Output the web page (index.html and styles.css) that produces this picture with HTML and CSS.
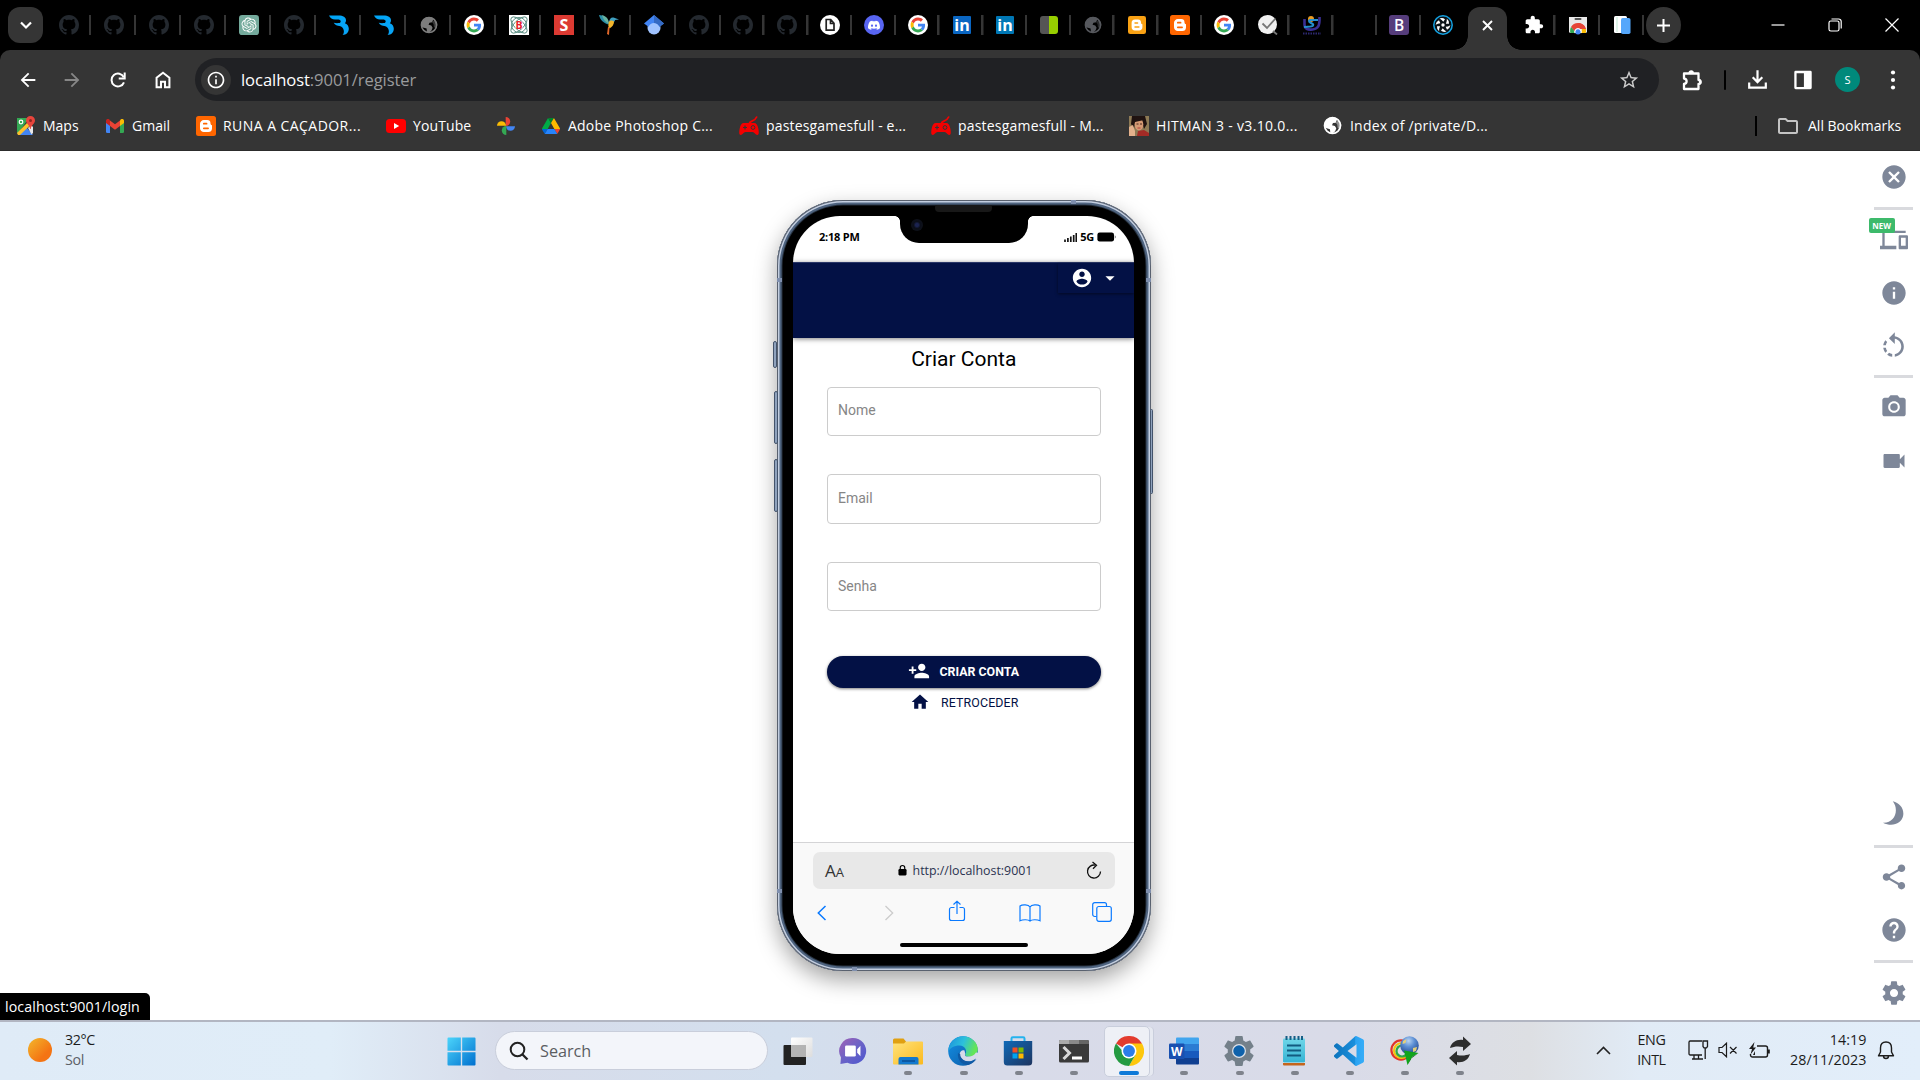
FILE: index.html
```html
<!DOCTYPE html>
<html lang="en">
<head>
<meta charset="utf-8">
<title>localhost:9001/register</title>
<link rel="stylesheet" href="styles.css">
</head>
<body>
<svg class="sprite" width="0" height="0" aria-hidden="true">
  <defs>
    <linearGradient id="g-win" x1="0" y1="0" x2="1" y2="1"><stop offset="0" stop-color="#4cd5fb"/><stop offset="1" stop-color="#0070cf"/></linearGradient>
    <linearGradient id="g-sun" x1="0" y1="0" x2="1" y2="1"><stop offset="0" stop-color="#f3b82c"/><stop offset=".7" stop-color="#f47413"/></linearGradient>
    <linearGradient id="g-front" x1="0" y1="0" x2="1" y2="1"><stop offset="0" stop-color="#fff"/><stop offset="1" stop-color="#ddd"/></linearGradient>
    <linearGradient id="g-chat" x1="0" y1="0" x2="1" y2="1"><stop offset="0" stop-color="#a261b5"/><stop offset=".5" stop-color="#6b63c7"/><stop offset="1" stop-color="#4b56cf"/></linearGradient>
    <linearGradient id="g-folder" x1="0" y1="0" x2="1" y2="1"><stop offset="0" stop-color="#ffe37c"/><stop offset="1" stop-color="#fbb91d"/></linearGradient>
    <linearGradient id="g-edge" x1="0" y1="0" x2="1" y2=".3"><stop offset="0" stop-color="#1b8fdc"/><stop offset=".55" stop-color="#2cc0dc"/><stop offset="1" stop-color="#63e557"/></linearGradient>
    <linearGradient id="g-edge2" x1="0" y1="0" x2="1" y2="1"><stop offset="0" stop-color="#1491e6"/><stop offset="1" stop-color="#0c59a4"/></linearGradient>
    <linearGradient id="g-store" x1="0" y1="0" x2="1" y2="1"><stop offset="0" stop-color="#0f69b7"/><stop offset="1" stop-color="#1e3560"/></linearGradient>
    <linearGradient id="g-code" x1="0" y1="0" x2="1" y2="0"><stop offset="0" stop-color="#0d74bd"/><stop offset=".7" stop-color="#1a8fdc"/><stop offset=".72" stop-color="#2ba3f2"/><stop offset="1" stop-color="#36adf8"/></linearGradient>
    <linearGradient id="g-note" x1="0" y1="0" x2="0" y2="1"><stop offset="0" stop-color="#6fd6e8"/><stop offset="1" stop-color="#35b4d4"/></linearGradient>
    <radialGradient id="g-idm" cx=".45" cy=".25" r=".8"><stop offset="0" stop-color="#b9d4f2"/><stop offset=".4" stop-color="#5c8fd4"/><stop offset="1" stop-color="#1d3f86"/></radialGradient>
    <linearGradient id="g-bird" x1="0" y1="0" x2="1" y2="1"><stop offset="0" stop-color="#00a6f7"/><stop offset="1" stop-color="#0aa4f5"/></linearGradient>
  </defs>
  <symbol id="github" viewBox="0 0 16 16"><path fill="#24292f" d="M8 0C3.58 0 0 3.58 0 8c0 3.54 2.29 6.53 5.47 7.59.4.07.55-.17.55-.38 0-.19-.01-.82-.01-1.49-2.01.37-2.53-.49-2.69-.94-.09-.23-.48-.94-.82-1.13-.28-.15-.68-.52-.01-.53.63-.01 1.08.58 1.23.82.72 1.21 1.87.87 2.33.66.07-.52.28-.87.51-1.07-1.78-.2-3.64-.89-3.64-3.95 0-.87.31-1.59.82-2.15-.08-.2-.36-1.02.08-2.12 0 0 .67-.21 2.2.82.64-.18 1.32-.27 2-.27.68 0 1.36.09 2 .27 1.53-1.04 2.2-.82 2.2-.82.44 1.1.16 1.92.08 2.12.51.56.82 1.27.82 2.15 0 3.07-1.87 3.75-3.65 3.95.29.25.54.73.54 1.48 0 1.07-.01 1.93-.01 2.2 0 .21.15.46.55.38A8.013 8.013 0 0 0 16 8c0-4.42-3.58-8-8-8z"/></symbol>
  <symbol id="chatgpt" viewBox="0 0 32 32"><rect width="32" height="32" rx="5" fill="#74aa9c"/><path fill="#fff" transform="translate(4 4)" d="M22.2819 9.8211a5.9847 5.9847 0 0 0-.5157-4.9108 6.0462 6.0462 0 0 0-6.5098-2.9A6.0651 6.0651 0 0 0 4.9807 4.1818a5.9847 5.9847 0 0 0-3.9977 2.9 6.0462 6.0462 0 0 0 .7427 7.0966 5.98 5.98 0 0 0 .511 4.9107 6.051 6.051 0 0 0 6.5146 2.9001A5.9847 5.9847 0 0 0 13.2599 24a6.0557 6.0557 0 0 0 5.7718-4.2058 5.9894 5.9894 0 0 0 3.9977-2.9001 6.0557 6.0557 0 0 0-.7475-7.0729zm-9.022 12.6081a4.4755 4.4755 0 0 1-2.8764-1.0408l.1419-.0804 4.7783-2.7582a.7948.7948 0 0 0 .3927-.6813v-6.7369l2.02 1.1686a.071.071 0 0 1 .038.052v5.5826a4.504 4.504 0 0 1-4.4945 4.4944zm-9.6607-4.1254a4.4708 4.4708 0 0 1-.5346-3.0137l.142.0852 4.783 2.7582a.7712.7712 0 0 0 .7806 0l5.8428-3.3685v2.3324a.0804.0804 0 0 1-.0332.0615L9.74 19.9502a4.4992 4.4992 0 0 1-6.1408-1.6464zM2.3408 7.8956a4.485 4.485 0 0 1 2.3655-1.9728V11.6a.7664.7664 0 0 0 .3879.6765l5.8144 3.3543-2.0201 1.1685a.0757.0757 0 0 1-.071 0l-4.8303-2.7865A4.504 4.504 0 0 1 2.3408 7.872zm16.5963 3.8558L13.1038 8.364 15.1192 7.2a.0757.0757 0 0 1 .071 0l4.8303 2.7913a4.4944 4.4944 0 0 1-.6765 8.1042v-5.6772a.79.79 0 0 0-.407-.667zm2.0107-3.0231l-.142-.0852-4.7735-2.7818a.7759.7759 0 0 0-.7854 0L9.409 9.2297V6.8974a.0662.0662 0 0 1 .0284-.0615l4.8303-2.7866a4.4992 4.4992 0 0 1 6.6802 4.66zM8.3065 12.863l-2.02-1.1638a.0804.0804 0 0 1-.038-.0567V6.0742a4.4992 4.4992 0 0 1 7.3757-3.4537l-.142.0805L8.704 5.459a.7948.7948 0 0 0-.3927.6813zm1.0976-2.3654l2.602-1.4998 2.6069 1.4998v2.9994l-2.5974 1.4997-2.6067-1.4997Z"/></symbol>
  <symbol id="swoosh" viewBox="0 0 20 20"><path fill="url(#g-bird)" d="M0 .5h9.500c4.600 0 7.500 1.900 7.500 4.800 0 1.400-.5 2.300-1.200 2.900 2.500.9 4 2.900 4 5.600 0 3.500-2.500 6.200-6.300 6.200 1.100-1 1.600-2.700 1.300-4.500-.4-2.400-2-4-4.300-4.400-2-.3-4.500-1-5.800-3.400 1.400.4 3.400.6 5.300.3 1.100-.2 1.700-.8 1.700-1.600 0-1.200-1.200-1.800-3.200-1.800H6C3.200 4.600 1.200 2.900 0 .5z"/></symbol>
  <symbol id="globe" viewBox="2 2 20 20"><path d="M12 3.600A8.400 8.400 0 1 0 12 20.400 8.400 8.400 0 0 0 12 3.600z" fill="none" stroke="currentColor" stroke-width="1.800"/><path fill="currentColor" d="M9 3.500c2 .3 5-1 8 1.500l-1.500 4-3 .4-1 2.400 3 .7 1.500 2.500-1.200 3-3 2.600-2-.2-.5-4.500-5-1.500L3 11l2-4z"/><path fill="currentColor" d="M15.500 9l3-3 3 5-1 5-3-1.500-.5-3.500z" opacity=".45"/></symbol>
  <symbol id="google" viewBox="0 0 20 20"><circle cx="10" cy="10" r="10" fill="#fff"/><g transform="translate(2.600 2.600) scale(.308)"><path fill="#EA4335" d="M24 9.500c3.540 0 6.710 1.220 9.210 3.600l6.850-6.850C35.900 2.380 30.470 0 24 0 14.620 0 6.510 5.380 2.560 13.220l7.980 6.190C12.430 13.720 17.740 9.500 24 9.500z"/><path fill="#4285F4" d="M46.980 24.550c0-1.570-.15-3.090-.38-4.550H24v9.020h12.940c-.58 2.960-2.260 5.480-4.780 7.180l7.730 6c4.510-4.180 7.090-10.360 7.090-17.650z"/><path fill="#FBBC05" d="M10.530 28.590c-.48-1.450-.76-2.990-.76-4.590s.27-3.140.76-4.590l-7.980-6.190C.92 16.460 0 20.120 0 24c0 3.880.92 7.540 2.560 10.780l7.970-6.190z"/><path fill="#34A853" d="M24 48c6.480 0 11.930-2.130 15.890-5.810l-7.730-6c-2.150 1.450-4.920 2.300-8.160 2.300-6.260 0-11.570-4.220-13.470-9.910l-7.980 6.190C6.510 42.620 14.620 48 24 48z"/></g></symbol>
  <symbol id="hummingbird" viewBox="0 0 20 20"><path fill="#2b8fa8" d="M0 0c4 0 9 3 9.500 9.500C5 8.500 1 5 0 0z"/><path fill="#67b2a0" d="M3 0c4 1 7 4 7 9-4-2-6-5-7-9z"/><path fill="#3f9fc0" d="M10 7c.5-3 2-5 4.500-4.500l5.500 2-4 .5c0 1-1 2-2 3z"/><path fill="#f2b52c" d="M10 7c1-2 3-2 5-.5 0 3-1.500 5-4.500 7-1.500-2-1.500-4-.5-6.500z"/><path fill="#e2682a" d="M10.500 12l-.5 8-2-1 1-7z"/></symbol>
  <symbol id="scholar" viewBox="0 0 20 20"><circle cx="10" cy="13" r="6.500" fill="#a0c3ff"/><path fill="#4285f4" d="M10 0L0 8.500l4.500 3.200C5.500 9.500 7.500 8 10 8s4.500 1.500 5.500 3.700L20 8.500z"/><path fill="#356ac3" d="M10 0l10 8.500-4.500 3.200C14.500 9.500 12.500 8 10 8z"/></symbol>
  <symbol id="page" viewBox="0 0 20 20"><circle cx="10" cy="10" r="10" fill="#fff"/><path d="M6.200 4.500h4.500l3.300 3.700v7H6.200zM10.500 4.500v4H14" fill="none" stroke="#222" stroke-width="1.700"/></symbol>
  <symbol id="discord" viewBox="0 0 20 20"><circle cx="10" cy="10" r="10" fill="#5865f2"/><path transform="translate(4 4.200) scale(.5)" fill="#fff" d="M20.317 4.370a19.790 19.790 0 0 0-4.885-1.515.074.074 0 0 0-.079.037c-.21.375-.444.864-.608 1.250a18.270 18.270 0 0 0-5.487 0 12.640 12.640 0 0 0-.617-1.250.077.077 0 0 0-.079-.037A19.736 19.736 0 0 0 3.677 4.370a.07.07 0 0 0-.032.027C.533 9.046-.32 13.580.099 18.057a.082.082 0 0 0 .031.057 19.900 19.900 0 0 0 5.993 3.030.078.078 0 0 0 .084-.028c.462-.63.874-1.295 1.226-1.994a.076.076 0 0 0-.041-.106 13.107 13.107 0 0 1-1.872-.892.077.077 0 0 1-.008-.128c.126-.094.252-.192.372-.291a.074.074 0 0 1 .077-.01c3.928 1.793 8.180 1.793 12.062 0a.074.074 0 0 1 .078.009c.12.1.246.198.373.292a.077.077 0 0 1-.006.127 12.299 12.299 0 0 1-1.873.892.077.077 0 0 0-.041.107c.36.698.772 1.362 1.225 1.993a.076.076 0 0 0 .084.028 19.839 19.839 0 0 0 6.002-3.030.077.077 0 0 0 .032-.054c.5-5.177-.838-9.674-3.549-13.660a.061.061 0 0 0-.031-.03zM8.020 15.330c-1.183 0-2.157-1.085-2.157-2.419 0-1.333.956-2.419 2.157-2.419 1.210 0 2.176 1.096 2.157 2.420 0 1.333-.956 2.418-2.157 2.418zm7.975 0c-1.183 0-2.157-1.085-2.157-2.419 0-1.333.955-2.419 2.157-2.419 1.210 0 2.176 1.096 2.157 2.420 0 1.333-.946 2.418-2.157 2.418z"/></symbol>
  <symbol id="halves" viewBox="0 0 20 20"><path fill="#555" d="M4 1h6v18H4a3 3 0 0 1-3-3V4a3 3 0 0 1 3-3z"/><path fill="#97cf00" d="M10 1h6a3 3 0 0 1 3 3v12a3 3 0 0 1-3 3h-6z"/></symbol>
  <symbol id="blogger" viewBox="0 0 20 20"><rect width="20" height="20" rx="2.500" fill="currentColor"/><path fill="#fff" d="M8 4h3a3.400 3.400 0 0 1 3.500 3.300c0 1.300.4 1.700 1.500 1.900v3.300A3.700 3.700 0 0 1 12.300 16H8a3.800 3.800 0 0 1-4-3.700V8a3.900 3.900 0 0 1 4-4z"/><path d="M7.800 7.700h2.800M7.800 12.300h4.300" stroke="currentColor" stroke-width="1.700" stroke-linecap="round"/></symbol>
  <symbol id="check" viewBox="0 0 20 20"><circle cx="9.500" cy="9.500" r="9.500" fill="#f1f1f1"/><path d="M4.500 8.500l4.500 4.500 8.500-9.500M15 16l4 3.500" fill="none" stroke="#777" stroke-width="1.800"/></symbol>
  <symbol id="unsave" viewBox="0 0 20 20"><path d="M2.500 4v6c0 3.500 3 5 8 4.500 5-.5 7.500-3 7-12.500" fill="none" stroke="#3a2f95" stroke-width="2.600"/><circle cx="9" cy="4" r="3" fill="#e89a23"/><path d="M16 5H8c-3.500 2.500 4.500 3 3 5.500-1 1.500-5 1-9 1.500" fill="none" stroke="#2590d0" stroke-width="2.200"/><path d="M1 18.500h18" stroke="#2d2870" stroke-width="2" stroke-dasharray="1.500 1"/></symbol>
  <symbol id="quasar" viewBox="0 0 20 20"><circle cx="10" cy="10" r="9.200" fill="#0b1216" stroke="#14a3e4" stroke-width="1.500"/><g fill="#fff"><path d="M6.500 3.500Q9.500 2.300 12 4.200L10.300 6.800Q9 4.800 6.500 3.500z"/><path d="M6.500 3.500Q9.500 2.300 12 4.200L10.300 6.800Q9 4.800 6.500 3.500z" transform="rotate(60 10 10)"/><path d="M6.500 3.500Q9.500 2.300 12 4.200L10.300 6.800Q9 4.800 6.500 3.500z" transform="rotate(120 10 10)"/><path d="M6.500 3.500Q9.500 2.300 12 4.200L10.300 6.800Q9 4.800 6.500 3.500z" transform="rotate(180 10 10)"/><path d="M6.500 3.500Q9.500 2.300 12 4.200L10.300 6.800Q9 4.800 6.500 3.500z" transform="rotate(240 10 10)"/><path d="M6.500 3.500Q9.500 2.300 12 4.200L10.300 6.800Q9 4.800 6.500 3.500z" transform="rotate(300 10 10)"/><circle cx="10" cy="10" r="1.700"/></g></symbol>
  <symbol id="extension" viewBox="0 0 24 24"><path fill="currentColor" d="M20.500 11H19V7c0-1.100-.9-2-2-2h-4V3.500C13 2.120 11.880 1 10.500 1S8 2.120 8 3.500V5H4c-1.100 0-1.990.9-1.990 2v3.800H3.500c1.490 0 2.700 1.210 2.700 2.700s-1.210 2.700-2.700 2.700H2V20c0 1.100.9 2 2 2h3.800v-1.500c0-1.490 1.210-2.700 2.700-2.700 1.490 0 2.700 1.210 2.700 2.700V22H17c1.100 0 2-.9 2-2v-4h1.500c1.380 0 2.500-1.120 2.500-2.500S21.880 11 20.500 11z"/></symbol>
  <symbol id="webstore" viewBox="0 0 20 20"><path fill="#e9e9e9" d="M1 2h18v15l-1 1H2l-1-1z"/><rect x="6.500" y="3" width="7" height="2" rx="1" fill="#555"/><path fill="#e64537" d="M10 8c4 0 7 2.500 7.800 6H10z"/><path fill="#e64537" d="M10 8a8 8 0 0 0-7 4l3.500 4.500L10 14h7.800C17 10.500 14 8 10 8z"/><path fill="#34a853" d="M3 12c-1 2-1 4-.7 6h5L6.500 16z"/><path fill="#fbbc05" d="M14 14h3.800c.4 1.500.2 3 0 4H13z"/><circle cx="10" cy="16.500" r="3" fill="#4285f4"/><path d="M7 18a3.200 3.200 0 1 1 6 0" fill="none" stroke="#fff" stroke-width="1.200"/></symbol>
  <symbol id="devices-blue" viewBox="0 0 20 20"><rect x="2" y="1" width="13" height="17" rx="1.500" fill="#fff"/><path d="M5 2v15" stroke="#9db" stroke-width=".6"/><rect x="9" y="3" width="9.500" height="16" rx="1.800" fill="#55a7fb"/></symbol>

  <symbol id="maps" viewBox="0 0 20 20"><path fill="#34a853" d="M1 2h12L2 17.500 1 17z"/><path fill="#4285f4" d="M3 19l7-8 7 8z"/><path fill="#fbc02d" d="M1 17L14 4l2.500 3L4 19H2z"/><path fill="#e8e8e8" d="M12 12l3-3 2 2v6l-1.500 1.500z"/><path fill="#e8453c" d="M14.500 0A4.500 4.500 0 0 1 19 4.500c0 3.200-3.500 4-4.300 8.500h-.6C13.500 8.500 10 7.700 10 4.500A4.500 4.500 0 0 1 14.500 0z"/><circle cx="14.500" cy="4.500" r="1.500" fill="#8e2720"/><circle cx="5" cy="6" r="1.800" fill="none" stroke="#fff" stroke-width="1.200"/></symbol>
  <symbol id="gmail" viewBox="0 0 20 20"><path fill="#4285f4" d="M1 6l4 3v8H2.300A1.300 1.300 0 0 1 1 15.700z"/><path fill="#34a853" d="M19 6l-4 3v8h2.700a1.300 1.300 0 0 0 1.300-1.300z"/><path fill="#ea4335" d="M5 4.500l5 3.800 5-3.800V10l-5 3.800L5 10z"/><path fill="#c5221f" d="M1 5c0-2 2-2.500 3.300-1.500L5 4.200V10L1 7z"/><path fill="#fbbc04" d="M19 5c0-2-2-2.500-3.300-1.500l-.7.700V10l4-3z"/></symbol>
  <symbol id="youtube" viewBox="0 0 20 20"><rect y="3" width="20" height="14" rx="3.500" fill="#f00"/><path fill="#fff" d="M8 7l5.200 3L8 13z"/></symbol>
  <symbol id="photos" viewBox="0 0 20 20"><path fill="#ea4335" d="M9.700 1A4.500 4.500 0 0 1 9.700 10z"/><path fill="#4285f4" d="M19 10.300a4.500 4.500 0 0 1-9 0z"/><path fill="#34a853" d="M10.300 19a4.500 4.500 0 0 1 0-9z"/><path fill="#fbbc04" d="M1 9.700a4.500 4.500 0 0 1 9 0z"/></symbol>
  <symbol id="drive" viewBox="0 0 87.300 78"><path fill="#0066da" d="m6.600 66.850 3.850 6.650c.8 1.400 1.950 2.500 3.300 3.300l13.750-23.800h-27.500c0 1.550.4 3.100 1.200 4.500z"/><path fill="#00ac47" d="m43.650 25-13.750-23.800c-1.350.8-2.500 1.900-3.300 3.300l-25.400 44a9.060 9.060 0 0 0 -1.200 4.500h27.500z"/><path fill="#ea4335" d="m73.550 76.800c1.350-.8 2.500-1.900 3.300-3.300l1.600-2.750 7.650-13.250c.8-1.400 1.200-2.950 1.200-4.500h-27.502l5.852 11.500z"/><path fill="#00832d" d="m43.650 25 13.750-23.800c-1.350-.8-2.900-1.200-4.500-1.200h-18.500c-1.600 0-3.150.45-4.500 1.200z"/><path fill="#2684fc" d="m59.800 53h-32.300l-13.750 23.800c1.350.8 2.900 1.200 4.500 1.200h50.800c1.600 0 3.150-.45 4.500-1.200z"/><path fill="#ffba00" d="m73.400 26.500-12.700-22c-.8-1.400-1.950-2.500-3.300-3.300l-13.750 23.800 16.150 28h27.450c0-1.550-.4-3.100-1.200-4.500z"/></symbol>
  <symbol id="gamepad" viewBox="0 0 20 20"><path d="M10.500 8c-.5-4 5-1.500 7.500-7.500" fill="none" stroke="#f50000" stroke-width="1.700"/><path fill="#f50000" d="M5 7h10c2.500 0 3.500 2 4.200 5 .8 3.500 1 7-1 7-1.700 0-2.700-3-4.700-3h-7c-2 0-3 3-4.700 3-2 0-1.800-3.500-1-7C1.500 9 2.500 7 5 7z"/><path d="M4 11.500h4M6 9.500v4" stroke="#353535" stroke-width="1.200"/><circle cx="14" cy="11.500" r="1.900" fill="none" stroke="#353535"/></symbol>
  <symbol id="portrait" viewBox="0 0 20 20"><rect width="20" height="20" fill="#8d7a55"/><path fill="#1f1210" d="M3 0h13l2 8-3 5-2-8-7 1-1 7-3-5z"/><ellipse cx="10" cy="8.500" rx="4.300" ry="6" fill="#d59a74"/><path fill="#201311" d="M5 0h10v4l-9 2z"/><path d="M7.500 8h2M11 8h2" stroke="#4b2a20"/><path d="M8.500 12h3" stroke="#b03d38"/><path fill="#e3b18c" d="M0 11l4-2 2 6v5H0z"/><path fill="#a32b26" d="M9 15l6-1 5 3v3H8z"/></symbol>
  <symbol id="folder-line" viewBox="0 0 24 24"><path fill="currentColor" d="M9.170 6l2 2H20v10H4V6h5.170M10 4H4c-1.100 0-1.990.9-1.990 2L2 18c0 1.100.9 2 2 2h16c1.100 0 2-.9 2-2V8c0-1.100-.9-2-2-2h-8l-2-2z"/></symbol>
  <symbol id="arrow-left" viewBox="0 0 24 24"><path fill="currentColor" d="M20 11H7.830l5.590-5.590L12 4l-8 8 8 8 1.410-1.410L7.830 13H20v-2z"/></symbol>
  <symbol id="reload" viewBox="0 0 24 24"><path d="M18.500 14.500A7 7 0 1 1 18.300 9" fill="none" stroke="currentColor" stroke-width="2.200"/><path fill="currentColor" d="M20.400 3.800v7.700h-7.600V9.300h5.400V3.800z"/></symbol>
  <symbol id="home-line" viewBox="0 0 24 24"><path d="M5 20V9.500L12 4l7 5.500V20h-4.800v-6.200H9.800V20z" fill="none" stroke="currentColor" stroke-width="2.200"/></symbol>
  <symbol id="info-line" viewBox="0 0 24 24"><path fill="currentColor" d="M11 7h2v2h-2zm0 4h2v6h-2zm1-9C6.480 2 2 6.480 2 12s4.480 10 10 10 10-4.480 10-10S17.520 2 12 2zm0 18c-4.410 0-8-3.590-8-8s3.590-8 8-8 8 3.590 8 8-3.590 8-8 8z"/></symbol>
  <symbol id="star" viewBox="0 0 24 24"><path fill="currentColor" d="M22 9.240l-7.190-.62L12 2 9.190 8.630 2 9.240l5.460 4.730L5.820 21 12 17.270 18.180 21l-1.630-7.030L22 9.240zM12 15.400l-3.760 2.270 1-4.280-3.320-2.880 4.380-.38L12 6.100l1.710 4.040 4.380.38-3.320 2.880 1 4.280L12 15.400z"/></symbol>
  <symbol id="puzzle-line" viewBox="0 0 24 24"><path d="M4 5.500h14.500V12c2.500 0 2.500 4 0 4v5H4v-5c3.500-.5 3.500-5 0-5.500z" fill="none" stroke="currentColor" stroke-width="2.300" stroke-linejoin="round"/><path fill="currentColor" d="M8.500 5a2.700 2.700 0 0 1 5.400 0zM19 11.200a2.700 2.700 0 0 1 0 5.400z"/></symbol>
  <symbol id="download" viewBox="0 0 24 24"><path d="M12 1.500V15M6.500 9.500L12 15l5.500-5.500M2.500 15.500v5.700h19v-5.700" fill="none" stroke="currentColor" stroke-width="2.500"/></symbol>
  <symbol id="side-panel" viewBox="0 0 24 24"><path fill="currentColor" fill-rule="evenodd" d="M4 2h16a1.500 1.500 0 0 1 1.500 1.500v17A1.500 1.500 0 0 1 20 22H4a1.500 1.500 0 0 1-1.500-1.500v-17A1.500 1.500 0 0 1 4 2zm1 2.500v15h8v-15z"/></symbol>

  <symbol id="account" viewBox="0 0 24 24"><path fill="currentColor" d="M12 2C6.480 2 2 6.480 2 12s4.480 10 10 10 10-4.480 10-10S17.520 2 12 2zm0 3c1.660 0 3 1.340 3 3s-1.340 3-3 3-3-1.340-3-3 1.340-3 3-3zm0 14.200c-2.500 0-4.710-1.280-6-3.220.03-1.990 4-3.080 6-3.080 1.990 0 5.970 1.090 6 3.080-1.290 1.940-3.500 3.220-6 3.220z"/></symbol>
  <symbol id="caret" viewBox="0 0 24 24"><path fill="currentColor" d="M7 10l5 5 5-5z"/></symbol>
  <symbol id="person-add" viewBox="0 0 24 24"><path fill="currentColor" d="M15 12c2.210 0 4-1.790 4-4s-1.790-4-4-4-4 1.790-4 4 1.790 4 4 4zm-9-2V7H4v3H1v2h3v3h2v-3h3v-2H6zm9 4c-2.670 0-8 1.340-8 4v2h16v-2c0-2.660-5.330-4-8-4z"/></symbol>
  <symbol id="home" viewBox="0 0 24 24"><path fill="currentColor" d="M10 20v-6h4v6h5v-8h3L12 3 2 12h3v8z"/></symbol>
  <symbol id="lock" viewBox="0 0 10 12"><rect x=".5" y="5" width="9" height="7" rx="1.200" fill="#000"/><path d="M2.500 5.500V3.500a2.500 2.500 0 0 1 5 0v2" fill="none" stroke="#000" stroke-width="1.300"/></symbol>
  <symbol id="ios-reload" viewBox="0 0 16 19"><path d="M14.500 10.500A6.500 6.500 0 1 1 9.500 4.200" fill="none" stroke="#111" stroke-width="1.300"/><path d="M6.500 1l4 3.300-3.500 3.500" fill="none" stroke="#111" stroke-width="1.300"/></symbol>

  <symbol id="cancel" viewBox="0 0 24 24"><path fill="currentColor" d="M12 2C6.470 2 2 6.470 2 12s4.470 10 10 10 10-4.470 10-10S17.530 2 12 2zm5 13.590L15.590 17 12 13.410 8.410 17 7 15.590 10.590 12 7 8.410 8.410 7 12 10.590 15.590 7 17 8.410 13.410 12 17 15.590z"/></symbol>
  <symbol id="devices" viewBox="0 0 24 24"><path fill="currentColor" d="M4 6h18V4H4c-1.100 0-2 .9-2 2v11H0v3h14v-3H4V6zm19 2h-6c-.55 0-1 .45-1 1v10c0 .55.45 1 1 1h6c.55 0 1-.45 1-1V9c0-.55-.45-1-1-1zm-1 9h-4v-7h4v7z"/></symbol>
  <symbol id="info" viewBox="0 0 24 24"><path fill="currentColor" d="M12 2C6.480 2 2 6.480 2 12s4.480 10 10 10 10-4.480 10-10S17.520 2 12 2zm1 15h-2v-6h2v6zm0-8h-2V7h2v2z"/></symbol>
  <symbol id="rotate" viewBox="0 0 24 24"><path fill="currentColor" d="M13,4.070V1L8.450,5.550L13,10V6.090C15.840,6.570 18,9.030 18,12C18,14.970 15.840,17.430 13,17.910V19.930C16.950,19.440 20,16.080 20,12C20,7.920 16.950,4.560 13,4.070M7.100,18.320C8.260,19.220 9.610,19.760 11,19.930V17.900C10.130,17.750 9.290,17.410 8.540,16.870L7.100,18.320M6.090,13H4.070C4.240,14.390 4.790,15.730 5.690,16.890L7.100,15.470C6.580,14.720 6.230,13.880 6.090,13M7.110,8.530L5.700,7.110C4.800,8.270 4.240,9.610 4.070,11H6.090C6.230,10.130 6.580,9.280 7.110,8.530Z"/></symbol>
  <symbol id="camera" viewBox="0 0 24 24"><circle cx="12" cy="12" r="3.200" fill="currentColor"/><path fill="currentColor" d="M9 2L7.170 4H4c-1.100 0-2 .9-2 2v12c0 1.100.9 2 2 2h16c1.100 0 2-.9 2-2V6c0-1.100-.9-2-2-2h-3.170L15 2H9zm3 15c-2.760 0-5-2.240-5-5s2.240-5 5-5 5 2.240 5 5-2.240 5-5 5z"/></symbol>
  <symbol id="video" viewBox="0 0 24 24"><path fill="currentColor" d="M17 10.500V7c0-.55-.45-1-1-1H4c-.55 0-1 .45-1 1v10c0 .55.45 1 1 1h12c.55 0 1-.45 1-1v-3.500l4 4v-11l-4 4z"/></symbol>
  <symbol id="moon" viewBox="0 0 24 24"><path fill="currentColor" d="M11 2c6 1.500 10 6.500 8.800 12.500C18.500 20.500 11 24.500 2.500 20.300 12 21 17 10 11 2z"/></symbol>
  <symbol id="share" viewBox="0 0 24 24"><path fill="currentColor" d="M18 16.080c-.76 0-1.440.3-1.960.77L8.910 12.700c.05-.23.09-.46.09-.7s-.04-.47-.09-.7l7.050-4.110c.54.5 1.250.81 2.040.81 1.660 0 3-1.340 3-3s-1.340-3-3-3-3 1.340-3 3c0 .24.04.47.09.7L8.040 9.810C7.500 9.310 6.790 9 6 9c-1.660 0-3 1.340-3 3s1.340 3 3 3c.79 0 1.500-.31 2.040-.81l7.120 4.160c-.05.21-.08.43-.08.65 0 1.610 1.310 2.920 2.920 2.920s2.920-1.310 2.920-2.920-1.310-2.920-2.920-2.920z"/></symbol>
  <symbol id="help" viewBox="0 0 24 24"><path fill="currentColor" d="M12 2C6.480 2 2 6.480 2 12s4.480 10 10 10 10-4.480 10-10S17.520 2 12 2zm1 17h-2v-2h2v2zm2.070-7.750l-.9.920C13.450 12.900 13 13.500 13 15h-2v-.5c0-1.100.45-2.100 1.170-2.830l1.240-1.260c.37-.36.59-.86.59-1.410 0-1.100-.9-2-2-2s-2 .9-2 2H8c0-2.210 1.790-4 4-4s4 1.790 4 4c0 .88-.36 1.680-.93 2.250z"/></symbol>
  <symbol id="gear" viewBox="0 0 24 24"><path fill="currentColor" d="M19.430 12.980c.04-.32.07-.64.07-.98s-.03-.66-.07-.98l2.110-1.650c.19-.15.24-.42.12-.64l-2-3.460c-.12-.22-.39-.3-.61-.22l-2.490 1c-.52-.4-1.080-.73-1.690-.98l-.38-2.650C14.460 2.180 14.250 2 14 2h-4c-.25 0-.46.18-.49.42l-.38 2.650c-.61.25-1.170.59-1.690.98l-2.490-1c-.23-.09-.49 0-.61.22l-2 3.460c-.13.22-.07.49.12.64l2.110 1.650c-.04.32-.07.65-.07.98s.03.66.07.98l-2.110 1.650c-.19.15-.24.42-.12.64l2 3.460c.12.22.39.3.61.22l2.490-1c.52.4 1.080.73 1.690.98l.38 2.650c.03.24.24.42.49.42h4c.25 0 .46-.18.49-.42l.38-2.650c.61-.25 1.170-.59 1.690-.98l2.490 1c.23.09.49 0 .61-.22l2-3.460c.12-.22.07-.49-.12-.64l-2.110-1.650zM12 15.500c-1.930 0-3.500-1.570-3.500-3.500s1.570-3.500 3.500-3.500 3.500 1.570 3.500 3.500-1.570 3.500-3.500 3.500z"/></symbol>

  <symbol id="windows" viewBox="0 0 30 30"><path fill="url(#g-win)" d="M.5 1.500a1 1 0 0 1 1-1h12.800v13.800H.5zM15.700.5h12.800a1 1 0 0 1 1 1v12.800H15.700zM.5 15.700h13.800v13.800H1.500a1 1 0 0 1-1-1zM15.700 15.700h13.800v12.800a1 1 0 0 1-1 1H15.700z"/></symbol>
  <symbol id="taskview" viewBox="0 0 30 30"><rect x=".5" y="9" width="22.500" height="20" rx="1" fill="#222"/><rect x="8" y="1.500" width="21.500" height="19.500" rx="1" fill="url(#g-front)"/><path fill="#a9a9a9" opacity=".85" d="M8 9h15v12H8z"/></symbol>
  <symbol id="teams-chat" viewBox="0 0 30 30"><path fill="url(#g-chat)" d="M15 1a14 14 0 1 1-6 26.600L1.500 29l.6-7A14 14 0 0 1 15 1z"/><rect x="6.500" y="9" width="11.500" height="12" rx="1.500" fill="#fff"/><path fill="#fff" d="M19.500 13l3.500-3.500v11L19.500 17z"/></symbol>
  <symbol id="explorer" viewBox="0 0 30 30"><path fill="#e0a012" d="M0 4a1.500 1.500 0 0 1 1.500-1.500h9l2.500 3V9H0z"/><path fill="url(#g-folder)" d="M0 7.500h11l2-2h16a1 1 0 0 1 1 1v21a1 1 0 0 1-1 1H1a1 1 0 0 1-1-1z"/><path fill="#1379ce" d="M5.500 28.500V23a2 2 0 0 1 2-2h16a2 2 0 0 1 2 2v5.500z"/><path d="M9 25h13" stroke="#0a4f94" stroke-width="1.500"/></symbol>
  <symbol id="edge" viewBox="0 0 30 30"><circle cx="15" cy="15" r="14.800" fill="url(#g-edge2)"/><path fill="url(#g-edge)" d="M.5 13C2 5 8 .2 15 .2c8 0 14.800 6 14.800 13 0 5-4.300 7.500-8.300 7.500-3 0-5-1-4.200-2.200 2.200-3.500 0-9-5.800-9C6 9.500 1.500 12 .5 16z"/><path fill="#d6dae9" d="M16.500 14.500c-2-1-4.500.5-4.800 3.500-.4 4 3.300 7.800 8.600 7.500 3.300-.2 5.700-1.500 7.700-3 .8-.6 1 .2.600.8L31 24V17l-3-.5c-1.500 3-5 4.200-7.500 4-3 0-4.300-1.200-3.200-2.500z"/><path fill="#0f5aa5" d="M10 17c-1 7 4 12 10 12 4-1 7-3.500 8.500-6-3 2-6 2.700-9 2.300-4.500-.6-7.300-3.500-7.300-7.300z"/></symbol>
  <symbol id="store" viewBox="0 0 30 30"><path d="M8.500 6V2.500A1.300 1.300 0 0 1 9.800 1.200h10.400a1.300 1.300 0 0 1 1.300 1.300V6" fill="none" stroke="#25b3ee" stroke-width="2"/><path fill="url(#g-store)" d="M.8 5h28.400v21a3.500 3.500 0 0 1-3.500 3.500H4.300A3.500 3.500 0 0 1 .8 26z"/><path fill="#f25022" d="M9.500 11.500h5v5h-5z"/><path fill="#7fba00" d="M15.500 11.500h5v5h-5z"/><path fill="#00a4ef" d="M9.500 17.500h5v5h-5z"/><path fill="#ffb900" d="M15.500 17.500h5v5h-5z"/></symbol>
  <symbol id="terminal" viewBox="0 0 30 30"><rect y="4" width="30" height="22.500" rx="1.500" fill="#3a3a3a"/><path fill="#aaa" d="M0 5.500A1.500 1.500 0 0 1 1.500 4H10v4H0z"/><path fill="#8a8a8a" d="M10 4h10v4H10z"/><path fill="#666" d="M20 4h8.500A1.500 1.500 0 0 1 30 5.500V8H20z"/><path d="M4.500 11l6 6-6 6" fill="none" stroke="#d7d7d7" stroke-width="3"/><path d="M13 22h10" stroke="#fff" stroke-width="3"/></symbol>
  <symbol id="chrome" viewBox="0 0 48 48"><path fill="#e33b2e" d="M24 24L3.200 12A24 24 0 0 1 44.800 12z"/><path fill="#fdc70c" d="M24 12h20.800A24 24 0 0 1 24 48l10.400-18z"/><path fill="#249a41" d="M3.200 12A24 24 0 0 0 24 48l10.400-18L24 24H13.600z"/><circle cx="24" cy="24" r="12" fill="#fff"/><circle cx="24" cy="24" r="9.500" fill="#2b7de9"/></symbol>
  <symbol id="win-settings" viewBox="0 0 24 24"><use href="#gear" transform="translate(-2.400 -2.400) scale(1.200)" color="#74808a"/><circle cx="12" cy="12" r="5.600" fill="#dfe3ea"/><circle cx="12" cy="12" r="4.600" fill="#0f62ab"/></symbol>
  <symbol id="notepad" viewBox="0 0 30 30"><path fill="#c5651c" d="M4 24h22v4.500a1 1 0 0 1-1 1H5a1 1 0 0 1-1-1z"/><path fill="#eee" d="M4 24h22v3H4z"/><rect x="4" y="2.500" width="22" height="24" rx="1" fill="url(#g-note)"/><path d="M7.500 0v4M11.500 0v4M15.500 0v4M19.500 0v4M23 0v4" stroke="#155f86" stroke-width="2"/><path d="M8 9.500h14M8 14.500h14M8 19.500h14" stroke="#125b80" stroke-width="1.800"/></symbol>
  <symbol id="vscode" viewBox="0 0 24 24"><path fill="url(#g-code)" d="M23.150 2.587L18.210.21a1.494 1.494 0 0 0-1.705.29l-9.460 8.630-4.120-3.128a.999.999 0 0 0-1.276.057L.327 7.261A1 1 0 0 0 .326 8.740L3.899 12 .326 15.260a1 1 0 0 0 .001 1.479L1.650 17.940a.999.999 0 0 0 1.276.057l4.120-3.128 9.460 8.630a1.492 1.492 0 0 0 1.704.29l4.942-2.377A1.500 1.500 0 0 0 24 20.060V3.939a1.500 1.500 0 0 0-.85-1.352zm-5.146 14.861L10.826 12l7.178-5.448v10.896z"/></symbol>
  <symbol id="idm" viewBox="0 0 30 30"><g fill="none" stroke-width="2.200"><circle cx="11" cy="14" r="9.600" stroke="#e1332a"/><circle cx="11.500" cy="14.500" r="7.500" stroke="#f4c40d"/><circle cx="12" cy="15" r="5.500" stroke="#2da84a"/></g><circle cx="19.500" cy="9.500" r="9.300" fill="url(#g-idm)"/><path fill="#e3cf7a" d="M13 5l3.500-2-1 4-3 1zM23 12l4-1-1 4-3 1z"/><path fill="#11a51b" d="M14 14.500l14.500 2.500-6 3.500-5 8.500z"/><path fill="#0b5f13" d="M17.500 29l5-8.500 6-3.500-8 6z"/></symbol>
  <symbol id="sync" viewBox="0 0 30 30"><path fill="#2e2e2e" d="M5 12C6.500 6 12 3 18 4V.5L26 8l-8 7v-4c-5-1-9-.5-13 1z"/><path fill="#2e2e2e" d="M25 18c-1.500 6-7 9-13 8v3.500L4 22l8-7v4c5 1 9 .5 13-1z"/></symbol>
</svg>

<header class="tabstrip">
  <button class="tab-search"><svg width="12" height="12" viewBox="0 0 12 12"><path d="M1 3.500l5 5 5-5" fill="none" stroke="#fff" stroke-width="2.200"/></svg></button>
  <div class="tabs tabs-wide">
    <span class="tab"><svg><use href="#github"/></svg></span>
    <span class="tab"><svg><use href="#github"/></svg></span>
    <span class="tab"><svg><use href="#github"/></svg></span>
    <span class="tab"><svg><use href="#github"/></svg></span>
    <span class="tab"><svg><use href="#chatgpt"/></svg></span>
    <span class="tab"><svg><use href="#github"/></svg></span>
    <span class="tab"><svg><use href="#swoosh"/></svg></span>
    <span class="tab"><svg><use href="#swoosh"/></svg></span>
    <span class="tab grey"><svg class="small"><use href="#globe"/></svg></span>
    <span class="tab"><svg><use href="#google"/></svg></span>
    <span class="tab"><svg viewBox="0 0 20 20"><rect width="20" height="20" fill="#fff"/><g fill="none" stroke="#4a8377" stroke-width=".9"><ellipse cx="10" cy="10" rx="4.600" ry="10.500" transform="rotate(45 10 10)"/><ellipse cx="10" cy="10" rx="4.600" ry="10.500" transform="rotate(-45 10 10)"/><circle cx="10" cy="10" r="7.500"/></g><circle cx="10" cy="10" r="4.300" fill="#fff"/><text x="10" y="13.800" text-anchor="middle" font-size="10.500" font-weight="700" fill="#e8202a">B</text></svg></span>
    <span class="tab"><svg viewBox="0 0 20 20"><rect width="20" height="20" fill="#dc3a32"/><text x="10" y="15.500" text-anchor="middle" font-size="16" font-weight="700" fill="#fff">S</text></svg></span>
    <span class="tab"><svg><use href="#hummingbird"/></svg></span>
    <span class="tab"><svg><use href="#scholar"/></svg></span>
    <span class="tab"><svg><use href="#github"/></svg></span>
  </div>
  <div class="tabs tabs-narrow">
    <span class="tab"><svg><use href="#github"/></svg></span>
    <span class="tab"><svg><use href="#github"/></svg></span>
    <span class="tab"><svg><use href="#page"/></svg></span>
    <span class="tab"><svg><use href="#discord"/></svg></span>
    <span class="tab"><svg><use href="#google"/></svg></span>
    <span class="tab"><svg viewBox="0 0 20 20"><rect x="1" y="1" width="18" height="18" rx="1" fill="#0a66c2"/><text x="10" y="16" text-anchor="middle" font-size="16" font-weight="700" fill="#fff">in</text></svg></span>
    <span class="tab"><svg viewBox="0 0 20 20"><rect x="1" y="1" width="18" height="18" rx="1" fill="#0077b5"/><text x="10" y="16" text-anchor="middle" font-size="16" font-weight="700" fill="#fff">in</text></svg></span>
    <span class="tab"><svg><use href="#halves"/></svg></span>
    <span class="tab darkgrey"><svg class="small"><use href="#globe"/></svg></span>
    <span class="tab amber"><svg class="small"><use href="#blogger"/></svg></span>
    <span class="tab orange"><svg><use href="#blogger"/></svg></span>
    <span class="tab"><svg><use href="#google"/></svg></span>
    <span class="tab"><svg><use href="#check"/></svg></span>
    <span class="tab"><svg><use href="#unsave"/></svg></span>
    <span class="tab"></span>
    <span class="tab"><svg viewBox="0 0 20 20"><rect width="20" height="20" rx="3" fill="#563d7c"/><text x="10" y="15.500" text-anchor="middle" font-size="15.500" font-weight="600" fill="#fff">B</text></svg></span>
    <span class="tab last"><svg><use href="#quasar"/></svg></span>
  </div>
  <div class="tab-active"><svg width="11" height="11" viewBox="0 0 11 11"><path d="M1 1l9 9M10 1l-9 9" stroke="#fff" stroke-width="1.900"/></svg></div>
  <div class="tabs tabs-after">
    <span class="tab white"><svg><use href="#extension"/></svg></span>
    <span class="tab"><svg><use href="#webstore"/></svg></span>
    <span class="tab"><svg><use href="#devices-blue"/></svg></span>
  </div>
  <button class="new-tab"><svg width="13" height="13" viewBox="0 0 13 13"><path d="M6.500 0v13M0 6.500h13" stroke="#fff" stroke-width="2"/></svg></button>
  <div class="window-controls">
    <svg viewBox="0 0 14 14"><path d="M.5 7h13" stroke="#fff" stroke-width="1.200"/></svg>
    <svg viewBox="0 0 14 14"><rect x="1" y="3" width="10" height="10" rx="1.800" fill="none" stroke="#fff" stroke-width="1.200"/><path d="M3.500 1h7.200A2.500 2.500 0 0 1 13.200 3.500v7" fill="none" stroke="#fff" stroke-width="1.200"/></svg>
    <svg viewBox="0 0 14 14"><path d="M.5.5l13 13M13.500.5l-13 13" stroke="#fff" stroke-width="1.200"/></svg>
  </div>
</header>

<section class="browser-chrome">
  <div class="toolbar">
    <div class="nav">
      <span><svg><use href="#arrow-left"/></svg></span>
      <span class="dim flip"><svg><use href="#arrow-left"/></svg></span>
      <span><svg><use href="#reload"/></svg></span>
      <span><svg><use href="#home-line"/></svg></span>
    </div>
    <div class="omnibox">
      <span class="site-info"><svg><use href="#info-line"/></svg></span>
      <span class="url">localhost<i>:9001/register</i></span>
      <svg class="star"><use href="#star"/></svg>
    </div>
    <div class="actions">
      <span><svg width="24" height="24"><use href="#puzzle-line"/></svg></span>
      <span class="divider"></span>
      <span><svg width="21" height="21"><use href="#download"/></svg></span>
      <span><svg width="22" height="22"><use href="#side-panel"/></svg></span>
      <span><b class="avatar">S</b></span>
      <span><svg width="6" height="22" viewBox="0 0 6 22"><g fill="#fff"><circle cx="3" cy="3.500" r="2.100"/><circle cx="3" cy="11" r="2.100"/><circle cx="3" cy="18.500" r="2.100"/></g></svg></span>
    </div>
  </div>
  <nav class="bookmarks">
    <a class="w-maps"><svg><use href="#maps"/></svg>Maps</a>
    <a class="w-gmail"><svg><use href="#gmail"/></svg>Gmail</a>
    <a class="w-runa orange"><svg><use href="#blogger"/></svg><em>RUNA A CAÇADOR...</em></a>
    <a class="w-youtube"><svg><use href="#youtube"/></svg>YouTube</a>
    <a class="w-photos"><svg><use href="#photos"/></svg></a>
    <a class="w-adobe"><svg><use href="#drive"/></svg>Adobe Photoshop C...</a>
    <a class="w-paste-e"><svg><use href="#gamepad"/></svg>pastesgamesfull - e...</a>
    <a class="w-paste-m"><svg><use href="#gamepad"/></svg>pastesgamesfull - M...</a>
    <a class="w-hitman"><svg><use href="#portrait"/></svg>HITMAN 3 - v3.10.0...</a>
    <a class="w-index white"><svg class="small"><use href="#globe"/></svg>Index of /private/D...</a>
    <span class="bookmark-divider"></span>
    <a class="w-all"><svg><use href="#folder-line"/></svg>All Bookmarks</a>
  </nav>
</section>

<main class="viewport">
  <div class="phone">
    <i class="key key-mute"></i><i class="key key-up"></i><i class="key key-down"></i><i class="key key-power"></i>
    <i class="band band-tl"></i><i class="band band-tr"></i><i class="band band-bl"></i><i class="band band-br"></i><i class="band band-top"></i><i class="band band-bottom"></i>
    <div class="screen">
      <div class="ios-status">
        <span>2:18 PM</span>
        <span class="signal">
          <svg width="13" height="10" viewBox="0 0 13 10"><path d="M1 10V7.500M3.900 10V6M6.800 10V4.500M9.700 10V3M12.300 10V1" stroke="#111" stroke-width="1.700"/></svg>
          5G
          <svg width="19" height="10" viewBox="0 0 19 10"><rect x=".4" y=".4" width="16.600" height="9.200" rx="2.300" fill="#000"/><path d="M17.800 3.300q1.600 1.700 0 3.400z" fill="#333"/></svg>
        </span>
      </div>
      <div class="appbar"><div class="account"><svg width="22" height="22"><use href="#account"/></svg><svg width="22" height="22"><use href="#caret"/></svg></div></div>
      <form class="register">
        <h1>Criar Conta</h1>
        <label class="field">Nome</label>
        <label class="field">Email</label>
        <label class="field">Senha</label>
        <div class="btn primary"><svg width="22" height="22"><use href="#person-add"/></svg>CRIAR CONTA</div>
        <div class="btn flat"><svg width="20" height="20"><use href="#home"/></svg>RETROCEDER</div>
      </form>
      <div class="safari">
        <div class="safari-url">
          <span class="aa">A<small>A</small></span>
          <span class="address"><svg width="9" height="12"><use href="#lock"/></svg>http://localhost:9001</span>
          <svg width="16" height="19"><use href="#ios-reload"/></svg>
        </div>
        <div class="safari-tools">
          <svg width="10" height="16" viewBox="0 0 10 16"><path d="M8.500 1L1.300 8l7.200 7" fill="none" stroke="#0a7aff" stroke-width="1.500"/></svg>
          <svg class="forward" width="10" height="16" viewBox="0 0 10 16"><path d="M1.500 1l7.200 7-7.200 7" fill="none" stroke="#ccc" stroke-width="1.300"/></svg>
          <svg class="share-sheet" width="18" height="22" viewBox="0 0 18 22"><path d="M6.500 7.500h-3a2 2 0 0 0-2 2v9a2 2 0 0 0 2 2h11a2 2 0 0 0 2-2v-9a2 2 0 0 0-2-2h-3M9 14V1.200M5.500 4.500L9 1.200l3.500 3.300" fill="none" stroke="#0a7aff" stroke-width="1.200"/></svg>
          <svg class="book" width="22" height="18" viewBox="0 0 22 18"><path d="M11 3C9.500.5 3.500.2 1 2v14.800c3-1.500 8.500-1.300 10 .2 1.500-1.500 7-1.700 10-.2V2c-2.500-1.800-8.500-1.500-10 1zM11 3v14" fill="none" stroke="#0a7aff" stroke-width="1.200"/></svg>
          <svg class="pages" width="20" height="20" viewBox="0 0 20 20"><rect x="4.800" y="4.500" width="14.500" height="14.800" rx="2" fill="none" stroke="#0a7aff" stroke-width="1.200"/><path d="M4.500 14.500H2.700a2 2 0 0 1-2-2V2.700a2 2 0 0 1 2-2h9.800a2 2 0 0 1 2 2v1.500" fill="none" stroke="#0a7aff" stroke-width="1.200"/></svg>
        </div>
        <div class="home-indicator"></div>
      </div>
    </div>
    <div class="notch"><i class="camera"></i></div>
    <i class="speaker"></i>
  </div>

  <aside class="simulator-tools">
    <svg><use href="#cancel"/></svg>
    <hr>
    <span class="devices"><svg><use href="#devices"/></svg><b>NEW</b></span>
    <svg class="t-info"><use href="#info"/></svg>
    <svg class="t-rotate"><use href="#rotate"/></svg>
    <hr>
    <svg class="t-camera"><use href="#camera"/></svg>
    <svg class="t-video"><use href="#video"/></svg>
    <svg class="t-moon"><use href="#moon"/></svg>
    <hr>
    <svg class="t-share"><use href="#share"/></svg>
    <svg class="t-help"><use href="#help"/></svg>
    <hr>
    <svg class="t-gear"><use href="#gear"/></svg>
  </aside>
  <div class="status-bubble">localhost:9001/login</div>
</main>

<footer class="taskbar">
  <div class="weather">
    <svg width="24" height="24"><circle cx="12" cy="12" r="12" fill="url(#g-sun)"/></svg>
    <p>32°C<br><span>Sol</span></p>
  </div>
  <svg class="start"><use href="#windows"/></svg>
  <div class="search"><svg width="20" height="20" viewBox="0 0 20 20"><circle cx="8.500" cy="8.500" r="6.800" fill="none" stroke="#222" stroke-width="2"/><path d="M13.500 13.500l5 5" stroke="#222" stroke-width="2.300"/></svg>Search</div>
  <div class="apps">
    <span class="app"><svg><use href="#taskview"/></svg></span>
    <span class="app"><svg class="mid"><use href="#teams-chat"/></svg></span>
    <span class="app run"><svg><use href="#explorer"/></svg></span>
    <span class="app run"><svg><use href="#edge"/></svg></span>
    <span class="app run"><svg><use href="#store"/></svg></span>
    <span class="app run"><svg><use href="#terminal"/></svg></span>
    <span class="app current"><svg><use href="#chrome"/></svg></span>
    <span class="app run"><svg viewBox="0 0 30 30"><path fill="#41a5ee" d="M7 2.500A1 1 0 0 1 8 1.500h21a1 1 0 0 1 1 1V8H7z"/><path fill="#2b7cd3" d="M7 8h23v7H7z"/><path fill="#185abd" d="M7 15h23v7H7z"/><path fill="#103f91" d="M7 22h23v5.500a1 1 0 0 1-1 1H8a1 1 0 0 1-1-1z"/><rect y="7.500" width="15.500" height="15.500" rx="1.200" fill="#1850b0"/><text x="7.700" y="19.500" text-anchor="middle" font-size="12" font-weight="700" fill="#fff">W</text></svg></span>
    <span class="app run"><svg><use href="#win-settings"/></svg></span>
    <span class="app run"><svg><use href="#notepad"/></svg></span>
    <span class="app run"><svg><use href="#vscode"/></svg></span>
    <span class="app run"><svg><use href="#idm"/></svg></span>
    <span class="app run"><svg><use href="#sync"/></svg></span>
  </div>
  <div class="tray">
    <svg class="chevron" width="15" height="9" viewBox="0 0 15 9"><path d="M1 8l6.500-6.500L14 8" fill="none" stroke="#222" stroke-width="1.600"/></svg>
    <p class="lang">ENG<br>INTL</p>
    <svg class="net" width="21" height="20" viewBox="0 0 21 20"><path d="M14 1H2.200A1.200 1.200 0 0 0 1 2.200v11.600A1.200 1.200 0 0 0 2.200 15H14M6 15v4M10.500 15v4M4 19h11" fill="none" stroke="#1c1c1c" stroke-width="1.300"/><path d="M15 1h4.500v5.500l-1 1.300H16l-1-1.300zM17.200 8v11" fill="none" stroke="#1c1c1c" stroke-width="1.300"/></svg>
    <svg class="mute" width="20" height="16" viewBox="0 0 20 16"><path d="M1 5.500h3L8.500 1.200v13.600L4 10.500H1zM12 5l6.500 6.500M18.500 5L12 11.500" fill="none" stroke="#1c1c1c" stroke-width="1.200"/></svg>
    <svg class="battery" width="21" height="17" viewBox="0 0 21 17"><path d="M8 4h8.500a2 2 0 0 1 2 2v7a2 2 0 0 1-2 2h-13a2 2 0 0 1-2-2v-1" fill="none" stroke="#1c1c1c" stroke-width="1.400"/><path fill="#1c1c1c" d="M19 7.500h1.800v4H19zM5.500 0L0 7h3l-1.500 5.500L7 5.500H4.200zM4 13h2V9z"/></svg>
    <p class="clock">14:19<br>28/11/2023</p>
    <svg class="bell" width="18" height="19" viewBox="0 0 18 19"><path d="M9 1C5.500 1 3.500 3.600 3.500 7v4L1.500 14.800h15L14.500 11V7C14.500 3.600 12.500 1 9 1zM6.500 15a2.500 2.500 0 0 0 5 0" fill="none" stroke="#1c1c1c" stroke-width="1.400" stroke-linejoin="round"/></svg>
  </div>
</footer>
</body>
</html>
```

FILE: styles.css
```css
* { box-sizing: border-box; }
html, body { height: 100%; }
body {
  margin: 0;
  display: grid;
  grid-template-rows: 50px 101px 869px 60px;
  width: 1920px;
  height: 1080px;
  overflow: hidden;
  background: #fff;
  font-family: "Open Sans", "Noto Sans", sans-serif;
}
svg { display: block; flex: none; }
p, h1 { margin: 0; }
button { border: 0; padding: 0; display: flex; align-items: center; justify-content: center; }
.sprite { position: absolute; }
.white { color: #fff; }
.grey { color: #7d7d7d; }
.darkgrey { color: #56585d; }
.amber { color: #f9a113; }
.orange { color: #ff6600; }

/* Tab strip */
.tabstrip { display: flex; background: #000; align-items: flex-start; }
.tab-search { width: 35px; height: 36px; margin: 7px 3px 0 8px; border-radius: 12px; background: #353535; }
.tabs { display: flex; height: 50px; }
.tab {
  display: flex; align-items: center; justify-content: center;
  background: linear-gradient(#353535, #353535) right center / 2.500px 20px no-repeat;
}
.tabs-wide .tab { width: 45px; }
.tabs-narrow .tab { width: 43.760px; }
.tab svg { width: 20px; height: 20px; }
.tab svg.small { width: 18px; height: 18px; }
.tab.last { background: none; }
.tab-active {
  position: relative;
  width: 39px; height: 43px; margin: 7px 0 0 3px;
  display: flex; align-items: center; justify-content: center;
  padding-bottom: 7px;
  background: #353535;
  border-radius: 12px 12px 0 0;
}
.tab-active::before, .tab-active::after {
  content: ""; position: absolute; bottom: 0; width: 14px; height: 14px;
}
.tab-active::before { right: 100%; background: radial-gradient(circle at 0 0, transparent 13.500px, #353535 14px); }
.tab-active::after { left: 100%; background: radial-gradient(circle at 100% 0, transparent 13.500px, #353535 14px); }
.tabs-after { margin-left: 5px; }
.tabs-after .tab { width: 44.200px; }
.new-tab { width: 35px; height: 36px; margin: 7px 0 0 2px; border-radius: 50%; background: #353535; }
.window-controls { display: flex; gap: 43px; margin: 18px 0 0 90px; }
.window-controls svg { width: 14px; height: 14px; }

/* Toolbar and bookmarks */
.browser-chrome {
  background: #353535;
  border-radius: 10px 10px 0 0;
  box-shadow: 0 -10px 0 #000;
  border-bottom: 1px solid #2c2c2c;
  clip-path: inset(0);
}
body { background: linear-gradient(#000 0 70px, #fff 70px); }
.toolbar { display: flex; align-items: center; height: 59px; padding: 0 5px 0 5px; }
.nav, .actions { display: flex; color: #fff; }
.nav span, .actions span { width: 45px; display: flex; align-items: center; justify-content: center; }
.nav svg { width: 22px; height: 22px; }
.nav .dim { color: #878787; }
.flip { transform: scaleX(-1); }
.omnibox {
  flex: 1; display: flex; align-items: center;
  height: 43px; margin: 0 10px 0 10px; padding: 0 19px 0 6px;
  border-radius: 22px; background: #202124;
}
.site-info { width: 30px; height: 30px; border-radius: 50%; background: #353535; display: flex; align-items: center; justify-content: center; color: #fff; }
.site-info svg { width: 20px; height: 20px; }
.url { margin-left: 10px; flex: 1; color: #fff; font-size: 16.600px; letter-spacing: -.08px; }
.url i { font-style: normal; color: #9a9b9d; }
.star { width: 22px; height: 22px; color: #ccc; }
.actions span.divider { width: 21px; }
.divider::before { content: ""; width: 2px; height: 20px; background: #000; border-radius: 1px; }
.avatar { width: 25px; height: 25px; border-radius: 50%; background: #00897b; font-size: 11px; font-weight: 400; line-height: 25px; text-align: center; }
.bookmarks { display: flex; align-items: center; height: 33px; padding-left: 16px; color: #fff; font-size: 14px; }
.bookmarks a { display: flex; align-items: center; gap: 7px; white-space: nowrap; }
.bookmarks em { font-style: normal; color: #fff; }
.bookmarks svg { width: 20px; height: 20px; }
.bookmarks svg.small { width: 19px; height: 19px; }
.w-maps { width: 89px; }
.w-gmail { width: 91px; }
.w-runa { width: 190px; letter-spacing: .450px; }
.w-youtube { width: 110px; letter-spacing: .1px; }
.w-photos { width: 45px; }
.w-adobe { width: 198px; letter-spacing: .220px; }
.w-adobe svg { padding: 1px; }
.w-paste-e { width: 192px; letter-spacing: .170px; }
.w-paste-m { width: 198px; letter-spacing: .200px; }
.w-hitman { width: 194px; letter-spacing: .330px; }
.w-index { width: 432px; letter-spacing: .200px; }
.bookmarks a.w-index { gap: 8px; }
.bookmark-divider { width: 2px; height: 20px; margin: 0 19px 0 0; background: #000; }
.w-all svg { width: 24px; height: 24px; color: #c4c4c4; }
.bookmarks a.w-all { gap: 8px; }

/* Page viewport */
.viewport { position: relative; display: flex; justify-content: center; padding: 49px 0 0 8px; background: #fff; }
.status-bubble {
  position: absolute; left: 0; bottom: 0; width: 150px; height: 27px;
  padding-left: 5px; line-height: 27px;
  background: #000; color: #fff; font-size: 14.200px; letter-spacing: .1px;
  border-top-right-radius: 5px;
}

/* Phone */
.phone {
  position: relative; width: 374px; height: 770.500px; padding: 16px;
  border-radius: 66px;
  background: #000;
  box-shadow:
    inset 0 0 0 1px #59616f,
    inset 0 0 0 2.500px #c3cee0,
    inset 0 0 0 4.500px #4f6480,
    inset 0 0 0 5.500px #26313f,
    0 9px 22px rgba(0, 0, 0, .36);
}
.screen { width: 341px; height: 738px; border-radius: 47px; overflow: hidden; display: flex; flex-direction: column; background: #fff; }
.notch {
  position: absolute; left: 123px; top: 15px; width: 128px; height: 27.500px;
  background: #000; border-radius: 0 0 19px 19px;
}
.notch::before, .notch::after { content: ""; position: absolute; top: 1px; width: 5px; height: 5px; }
.notch::before { right: 100%; background: radial-gradient(circle at 0 100%, transparent 4.500px, #000 5px); }
.notch::after { left: 100%; background: radial-gradient(circle at 100% 100%, transparent 4.500px, #000 5px); }
.camera { position: absolute; left: 11px; top: 4px; width: 12px; height: 12px; border-radius: 50%; background: radial-gradient(#1b2350 0 1.500px, #0b0e19 3.500px, #10131a); }
.speaker { position: absolute; left: 158px; top: 5px; width: 57px; height: 7px; border-radius: 2px 2px 4px 4px; background: #181818; }
.key { position: absolute; width: 4px; background: #8fa2bd; border: 1px solid #43536b; border-radius: 2px; }
.key-mute { left: -4px; top: 141px; height: 27px; }
.key-up { left: -3px; top: 191px; height: 53px; }
.key-down { left: -3px; top: 259px; height: 53px; }
.key-power { right: -2px; top: 209px; width: 3px; height: 85px; }
.band { position: absolute; background: #7f8fae; width: 5px; height: 4px; }
.band-tl { left: 0; top: 78px; }
.band-tr { right: 0; top: 78px; }
.band-bl { left: 0; top: 689px; }
.band-br { right: 0; top: 689px; }
.band-top { left: 294px; top: 0; }
.band-bottom { left: 75px; bottom: 0; }
.ios-status { display: flex; justify-content: space-between; height: 46px; padding: 13px 18px 0 26px; font-size: 11px; line-height: 15px; font-weight: 700; letter-spacing: -.2px; }
.signal { display: flex; gap: 3px; height: 15px; align-items: center; }
.appbar { display: flex; justify-content: flex-end; align-items: flex-start; height: 75.500px; background: #031145; border-top: 1px solid #2a3767; box-shadow: 0 1px 5px rgba(0, 0, 0, .5); position: relative; flex: none; }
.account { display: flex; align-items: center; gap: 6px; width: 76px; height: 30px; padding-left: 13px; color: #fff; box-shadow: 0 1px 3px rgba(0, 0, 0, .5); }
.register { flex: 1; display: flex; flex-direction: column; padding: 7px 33.500px 0 34px; font-family: Roboto, sans-serif; }
.register h1 { font-size: 21px; line-height: 28px; font-weight: 400; text-align: center; margin-bottom: 14px; }
.field { display: flex; align-items: center; height: 49.500px; margin-bottom: 38.200px; padding: 0 10px 2px; border: 1px solid #ccc; border-radius: 4px; color: #868686; font-size: 14px; }
.btn { display: flex; align-items: center; justify-content: center; font-size: 12.400px; }
.primary { margin-top: 6px; height: 32px; gap: 9px; border-radius: 16px; background: #031145; color: #fff; font-weight: 700; box-shadow: 0 1px 3px rgba(0, 0, 0, .5); padding-bottom: 1px; }
.flat { height: 29px; gap: 11px; color: #031145; font-weight: 400; letter-spacing: .1px; padding-left: 1px; }
.safari { height: 112.500px; padding: 9px 19px 0 20px; background: #f9f9f9; border-top: 1px solid #d4d4d6; }
.safari-url { display: flex; align-items: center; justify-content: space-between; height: 37px; padding: 0 13px 0 12px; border-radius: 7px; background: #e8e8e8; }
.aa { font-size: 17px; color: #333; letter-spacing: 0; font-weight: 400; line-height: 20px; margin-top: 3px; }
.aa small { font-size: 13px; }
.address { display: flex; align-items: center; gap: 6px; font-size: 12.400px; color: #2b3350; }
.safari-tools { display: flex; align-items: center; height: 22px; margin: 13px 0 0 4px; }
.forward { margin-left: 57px; }
.share-sheet { margin: 0 0 3px 54px; }
.book { margin: 0 0 0 53px; }
.pages { margin: 0 0 2px 51px; }
.home-indicator { width: 128px; height: 4px; margin: 19px 0 0 87px; border-radius: 2px; background: #000; }

/* Simulator tool column */
.simulator-tools { position: absolute; right: 0; top: 0; width: 53px; height: 869px; display: flex; flex-direction: column; align-items: center; padding-top: 12px; color: #7e8799; }
.simulator-tools svg { width: 28px; height: 28px; }
.simulator-tools hr { width: 39px; height: 3px; margin: 16px 0; border: 0; background: #d9dade; }
.devices { position: relative; height: 28px; }
.devices b { position: absolute; left: -11px; top: -8px; width: 26px; height: 15px; border-radius: 2px; background: #3dba6b; color: #fff; font-size: 8px; line-height: 15px; text-align: center; }
.simulator-tools .t-info { margin-top: 25px; }
.simulator-tools .t-rotate { margin-top: 24px; width: 31px; height: 31px; }
.simulator-tools .t-rotate + hr { margin-top: 13px; margin-bottom: 15px; }
.simulator-tools .t-video { margin-top: 26px; }
.simulator-tools .t-moon { margin-top: auto; }
.simulator-tools .t-moon + hr { margin-top: 18px; margin-bottom: 14px; }
.simulator-tools .t-share { width: 30px; height: 30px; }
.simulator-tools .t-help { margin-top: 24px; }
.simulator-tools .t-gear { margin-bottom: 13px; }

/* Taskbar */
.taskbar {
  display: flex; align-items: center;
  border-top: 2px solid #b2b6c2;
  background: linear-gradient(90deg, #dfebf7 0, #e0edf8 330px, #d7dcea 500px, #d3dfee 780px, #d8dbe9 1000px, #d9dbe8 1350px, #dddfe3 1530px, #e1ebf6 1640px, #e2eefa 1920px);
  color: #1c1c1c; font-size: 14.300px; line-height: 20px;
}
.weather { display: flex; align-items: center; gap: 13px; width: 447px; padding-left: 28px; padding-bottom: 2px; }
.weather p { letter-spacing: -.4px; }
.weather span { color: #5d6168; }
.start { width: 29px; height: 29px; }
.search { display: flex; align-items: center; gap: 11px; width: 273px; height: 39px; margin: 0 0 1px 19px; padding-left: 13px; border-radius: 20px; background: #f3f5fa; border: 1px solid #c9cedb; color: #5b5d62; font-size: 16.200px; }
.apps { display: flex; margin-left: 2px; padding-bottom: 1px; }
.app { position: relative; width: 55.200px; height: 58px; display: flex; align-items: center; justify-content: center; }
.app svg { width: 30px; height: 30px; position: relative; }
.app svg.mid { width: 28px; height: 28px; }
.run::after, .current::after { content: ""; position: absolute; left: 24px; bottom: 5px; width: 8px; height: 4px; border-radius: 2px; background: #7f838c; }
.current::before { content: ""; position: absolute; left: 3px; top: 4px; width: 44px; height: 49px; border-radius: 5px; background: #eef0f6; border: 1px solid #c9cedc; box-shadow: 4px 0 0 -1px #e6e9f1, 5px 0 0 -1px #c9cedc; }
.current::after { left: 18px; width: 20px; background: #0f7ad8; }
.tray { flex: 1; display: flex; align-items: center; padding-bottom: 2px; }
.tray p { letter-spacing: -.4px; }
.chevron { margin-left: 109px; }
.lang { width: 40px; margin-left: 20px; text-align: center; }
.net { margin-left: 17px; }
.mute { margin-left: 9px; }
.battery { margin-left: 11px; }
.tray p.clock { width: 90px; margin-left: 6px; text-align: right; letter-spacing: .050px; }
.bell { margin-left: 11px; }
```
